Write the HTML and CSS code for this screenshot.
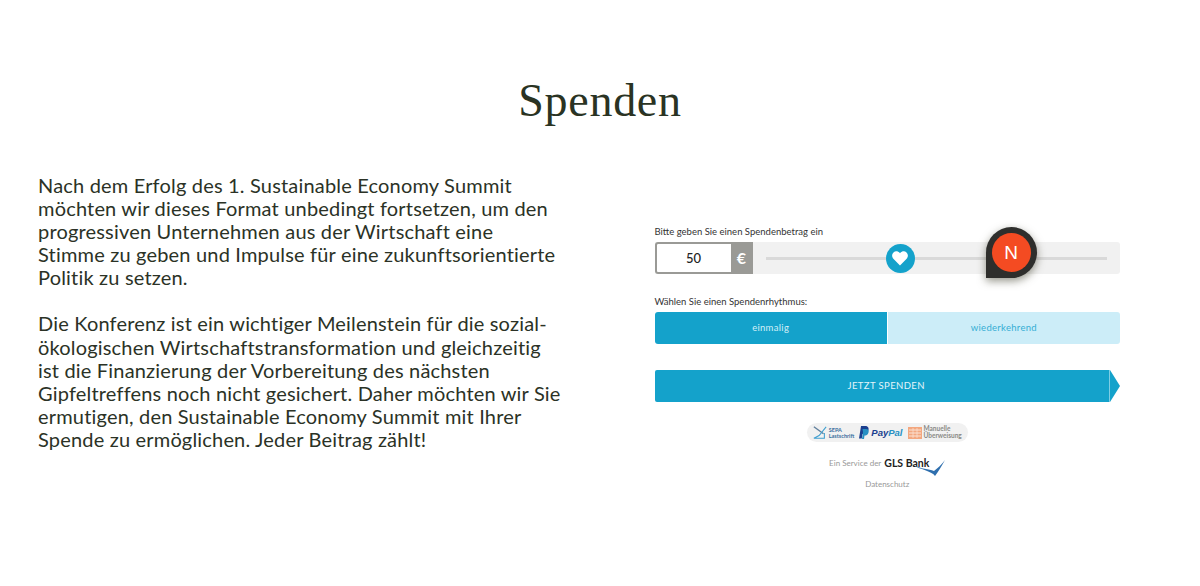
FILE: index.html
```html
<!DOCTYPE html>
<html>

  <head>
    <title>Spenden</title>
    <link rel="stylesheet" href="styles.css">
  </head>

  <body>
    <h1 class="title">Spenden</h1>
    <div class="columns">
      <div class="copy">
        <p>Nach dem Erfolg des 1. Sustainable Economy Summit<br>möchten wir dieses Format unbedingt fortsetzen, um den<br>progressiven Unternehmen aus der Wirtschaft eine<br>Stimme zu geben und Impulse für eine zukunftsorientierte<br>Politik zu setzen.</p>
        <p>Die Konferenz ist ein wichtiger Meilenstein für die sozial-<br>ökologischen Wirtschaftstransformation und gleichzeitig<br>ist die Finanzierung der Vorbereitung des nächsten<br>Gipfeltreffens noch nicht gesichert. Daher möchten wir Sie<br>ermutigen, den Sustainable Economy Summit mit Ihrer<br>Spende zu ermöglichen. Jeder Beitrag zählt!</p>
      </div>

      <form class="donate">
        <div class="label">Bitte geben Sie einen Spendenbetrag ein</div>
        <div class="amount-row">
          <div class="amount">50</div>
          <div class="currency">€</div>
          <div class="slider">
            <div class="track"></div>
            <div class="thumb">
              <svg width="16" height="15" viewBox="0 0 16 15"><path d="M8 14.500 1.600 8.100C-.4 6-.3 3 1.500 1.400 3.300-.2 6-.1 8 2.300 10-.1 12.700-.2 14.500 1.400 16.300 3 16.400 6 14.400 8.100Z" fill="#fff"/></svg>
            </div>
          </div>
          <div class="pin"><span class="pin-dot">N</span></div>
        </div>

        <div class="label rhythm-label">Wählen Sie einen Spendenrhythmus:</div>
        <div class="rhythm">
          <div class="choice active">einmalig</div>
          <div class="choice">wiederkehrend</div>
        </div>

        <div class="submit">
          <div class="submit-bar">JETZT SPENDEN</div>
          <svg class="submit-tip" width="10" height="32" viewBox="0 0 10 32"><path d="M0 0 10 16 0 32Z" fill="#14a2cb"/></svg>
        </div>

        <div class="methods">
          <div class="method">
            <svg width="14" height="15" viewBox="0 0 16 15"><path d="M1 1 12 9" stroke="#5f7f9c" stroke-width="1.500" fill="none"/><path d="M15 1 7 11 1 14H13V8" stroke="#3f9fd0" stroke-width="1.200" fill="none"/></svg>
            <span class="sepa">SEPA<br>Lastschrift</span>
          </div>
          <div class="method">
            <svg width="10" height="13" viewBox="0 0 10 13"><path d="M2 0H6C9 0 10 2 9.500 4 9 7 7 8 4.500 8H3.500L2.800 12.500H0Z" fill="#1b3f8f"/><path d="M3.500 3H7C9.500 3 10 5 9.500 6.500 9 9 7 9.500 5.500 9.500L5 13H3L4 6Z" fill="#2790c3"/></svg>
            <span class="paypal"><b>Pay</b><i>Pal</i></span>
          </div>
          <div class="method">
            <svg width="14" height="12" viewBox="0 0 14 12"><rect width="14" height="12" fill="#f3a77f"/><path d="M1 3H13M1 6H13M1 9H13" stroke="#fbe3d5" stroke-width="1"/><path d="M5 1V11M9 1V11" stroke="#fbe3d5" stroke-width=".7"/></svg>
            <span class="manual">Manuelle<br>Überweisung</span>
          </div>
        </div>

        <div class="service">
          <span class="service-text">Ein Service der</span>
          <span class="gls">GLS Bank</span>
          <svg class="gls-swoosh" width="32" height="16" viewBox="0 0 32 16"><path d="M0 5C8 9 16 9 21 11 25 8 29 4 32 0 29 5 26 11 22 16 19 11 8 10 0 5Z" fill="#2f6fae"/></svg>
        </div>
        <div class="privacy">Datenschutz</div>
      </form>
    </div>
  </body>

</html>
```

FILE: styles.css
```css
body {
  margin: 0;
  background-color: #fff;
  color: #2b3226;
  font-family: "Lato", sans-serif;
}

.title {
  margin: 0;
  padding-top: 74px;
  font-family: "Liberation Serif", serif;
  font-size: 46px;
  line-height: 53px;
  font-weight: 400;
  text-align: center;
  letter-spacing: 0.7px;
  color: #2a3323;
}

.columns {
  display: flex;
  padding: 47px 80px 0 38px;
}

.copy {
  width: 616.500px;
  font-size: 20px;
  line-height: 23.100px;
  letter-spacing: 0.18px;
}

.copy p {
  margin: 0 0 23px;
}

.donate {
  width: 465.500px;
  padding-top: 52px;
  font-family: "Lato", sans-serif;
}

.label {
  font-size: 9.500px;
  line-height: 12px;
  color: #333;
}

.amount-row {
  position: relative;
  display: flex;
  align-items: center;
  height: 32px;
  margin-top: 4px;
  background-color: #f1f1f1;
  border-radius: 3px;
}

.amount {
  box-sizing: border-box;
  width: 76px;
  height: 32px;
  border: 2px solid #9a9a96;
  border-right: 0;
  border-radius: 3px 0 0 3px;
  background-color: #fff;
  font-size: 13px;
  font-weight: 500;
  line-height: 28px;
  text-align: center;
  color: #222;
}

.currency {
  width: 22px;
  height: 32px;
  background-color: #9a9a96;
  color: #fff;
  font-size: 16px;
  font-weight: 700;
  line-height: 32px;
  text-align: center;
}

.slider {
  position: relative;
  flex: 1;
  margin: 0 13px;
}

.track {
  height: 3px;
  background-color: #d9d9d9;
}

.thumb {
  position: absolute;
  top: -13px;
  left: 120px;
  display: flex;
  align-items: center;
  justify-content: center;
  width: 29px;
  height: 29px;
  border-radius: 50%;
  background-color: #14a2cb;
}

.pin {
  position: absolute;
  top: -15px;
  left: 331px;
  display: flex;
  align-items: center;
  justify-content: center;
  width: 51px;
  height: 51px;
  border-radius: 50% 50% 50% 0;
  background-color: #2e2e2c;
  box-shadow: 0 3px 8px rgba(60, 60, 40, 0.55);
}

.pin-dot {
  width: 39px;
  height: 39px;
  border-radius: 50%;
  background-color: #f44b22;
  color: #fff;
  font-family: "Liberation Sans", sans-serif;
  font-size: 19px;
  line-height: 39px;
  text-align: center;
}

.rhythm-label {
  margin-top: 22px;
}

.rhythm {
  display: flex;
  gap: 1px;
  height: 32px;
  margin-top: 4px;
  font-size: 9.500px;
  line-height: 32px;
  text-align: center;
  letter-spacing: 0.3px;
}

.choice {
  flex: 1;
  background-color: #ccedf8;
  color: #35aed4;
  border-radius: 0 3px 3px 0;
}

.choice.active {
  background-color: #14a2cb;
  color: #d5f0f8;
  border-radius: 3px 0 0 3px;
}

.submit {
  display: flex;
  height: 32px;
  margin-top: 26px;
}

.submit-bar {
  flex: 1;
  padding-left: 9px;
  background-color: #14a2cb;
  border-right: 1px solid #7fcde4;
  border-radius: 2px 0 0 2px;
  color: #e4f5fa;
  font-size: 9.500px;
  line-height: 32px;
  letter-spacing: 0.4px;
  text-align: center;
}

.methods {
  display: flex;
  align-items: center;
  justify-content: center;
  gap: 5px;
  width: 161px;
  height: 19px;
  margin: 21px auto 0;
  border-radius: 10px;
  background-color: #f1f1f1;
}

.method {
  display: flex;
  align-items: center;
  gap: 2px;
}

.sepa {
  font-size: 5.500px;
  line-height: 6px;
  font-weight: 700;
  color: #3a6f9e;
}

.paypal {
  font-family: "Liberation Sans", sans-serif;
  font-size: 9.500px;
  font-weight: 700;
  font-style: italic;
}

.paypal b {
  color: #1b3f8f;
}

.paypal i {
  color: #2790c3;
}

.manual {
  font-size: 6.500px;
  line-height: 6.500px;
  font-weight: 700;
  color: #8a8a86;
}

.service {
  display: flex;
  align-items: center;
  justify-content: center;
  height: 20px;
  margin-top: 11px;
}

.service-text {
  margin-right: 3px;
  font-size: 8px;
  color: #999;
}

.gls {
  font-size: 10.500px;
  font-weight: 700;
  color: #222;
}

.gls-swoosh {
  margin: 9px 0 0 -16px;
}

.privacy {
  margin-top: 5px;
  font-size: 8px;
  line-height: 12px;
  color: #999;
  text-align: center;
}
```
